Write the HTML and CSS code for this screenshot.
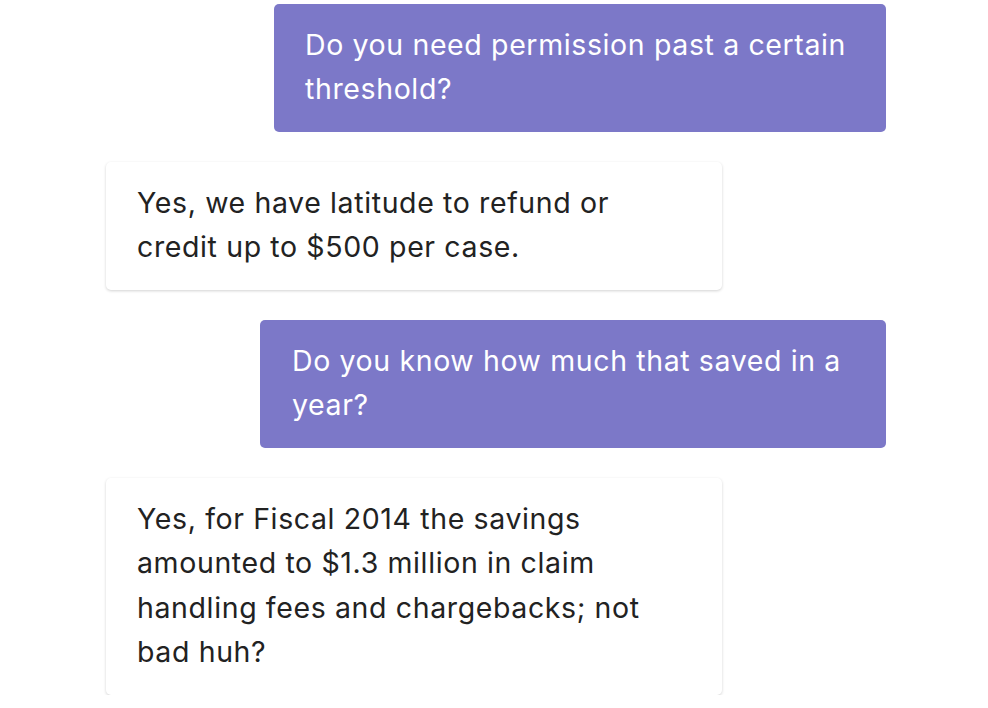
FILE: index.html
```html
<!DOCTYPE html>
<html>
<head>
<meta charset="utf-8">
<link rel="stylesheet" href="styles.css">
</head>
<body>
<div class="chat">
  <div class="msg msg--out msg--w612">Do you need permission past a certain threshold?</div>
  <div class="msg msg--in">Yes, we have latitude to refund or credit up to $500 per case.</div>
  <div class="msg msg--out msg--w626">Do you know how much that saved in a year?</div>
  <div class="msg msg--in">Yes, for Fiscal 2014 the savings amounted to $1.3 million in claim handling fees and chargebacks; not bad huh?</div>
</div>
</body>
</html>
```
FILE: styles.css
```css
html, body {
  margin: 0;
  padding: 0;
  background: #ffffff;
}
body {
  font-family: Inter, "Noto Sans", sans-serif;
  font-size: 28.5px;
  letter-spacing: 0.62px;
  line-height: 44.5px;
  color: #222222;
}
.chat {
  width: 780px;
  margin-left: 106px;
  padding-top: 4px;
  display: flex;
  flex-direction: column;
  gap: 30.5px;
}
.msg {
  box-sizing: border-box;
  padding: 18.75px 31px 19.75px 31px;
  border-radius: 5px;
}
.msg--out {
  align-self: flex-end;
  background: #7c78c8;
  color: #ffffff;
}
.msg--w612 { width: 612px; }
.msg--w626 { width: 626px; padding-left: 32px; }
.msg--in {
  align-self: flex-start;
  width: 616px;
  background: #ffffff;
  box-shadow: 0 1px 3px rgba(0, 0, 0, 0.18);
}
```
